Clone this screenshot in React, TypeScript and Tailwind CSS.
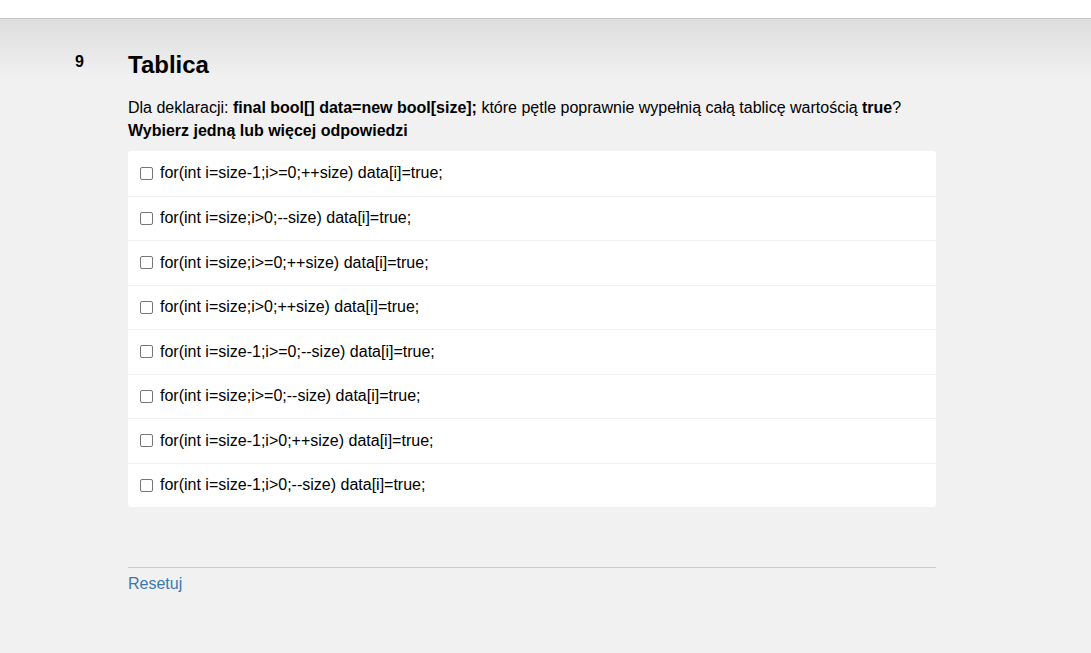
import React from "react";

const options = [
  "for(int i=size-1;i>=0;++size) data[i]=true;",
  "for(int i=size;i>0;--size) data[i]=true;",
  "for(int i=size;i>=0;++size) data[i]=true;",
  "for(int i=size;i>0;++size) data[i]=true;",
  "for(int i=size-1;i>=0;--size) data[i]=true;",
  "for(int i=size;i>=0;--size) data[i]=true;",
  "for(int i=size-1;i>0;++size) data[i]=true;",
  "for(int i=size-1;i>0;--size) data[i]=true;",
];

export default function App() {
  return (
    <div
      className="min-h-[653px] w-full bg-[#f1f1f1] text-black"
      style={{ fontFamily: '"Liberation Sans", Arial, sans-serif' }}
    >
      <div className="h-[19px] bg-white border-b border-[#c9c9c9]" />
      <div className="bg-[linear-gradient(to_bottom,#dddddd,#f1f1f1_60px)] pt-[32px] pb-[60px]">
        <div className="flex">
          <div className="w-[128px] shrink-0 pl-[75px] text-[16px] font-bold leading-[22px]">9</div>
          <div className="w-[808px]">
            <h1 className="text-[24px] font-bold leading-[28px]">Tablica</h1>
            <p className="mt-[17px] text-[16px] leading-[23px]">
              Dla deklaracji: <b>final bool[] data=new bool[size];</b> które pętle poprawnie wypełnią całą tablicę
              wartością <b>true</b>?
            </p>
            <p className="text-[16px] leading-[23px] font-bold">Wybierz jedną lub więcej odpowiedzi</p>
            <div className="mt-[9px] bg-white rounded-[3px]">
              {options.map((o, i) => (
                <div
                  key={i}
                  className={
                    "flex items-center h-[44.5px] pl-[12px] text-[16px] " +
                    (i > 0 ? "border-t border-[#efefef]" : "")
                  }
                >
                  <span className="inline-block w-[13px] h-[13px] border border-[#767676] rounded-[2px] bg-white mr-[7px] shrink-0" />
                  <span>{o}</span>
                </div>
              ))}
            </div>
            <div className="mt-[60px] border-t border-[#cccccc]" />
            <div className="mt-[7px] text-[16px] leading-[18px] text-[#3b78b1]">Resetuj</div>
          </div>
        </div>
      </div>
    </div>
  );
}
